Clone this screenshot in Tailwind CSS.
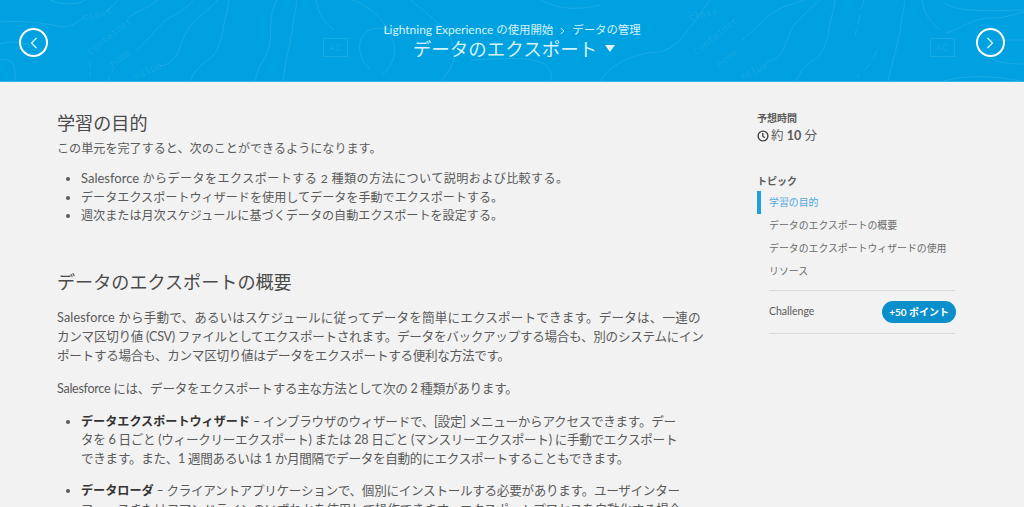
<!DOCTYPE html>
<html lang="ja">
<head>
    <meta charset="UTF-8">
    <title>データのエクスポート</title>
    <script src="https://cdn.jsdelivr.net/npm/@tailwindcss/browser@4"></script>
</head>
<body class="h-[507px] overflow-hidden bg-[#f2f2f2] font-['Lato','Noto_Sans_CJK_JP',sans-serif] text-[#5a5a5a]">

    <!-- Header band -->
    <header class="relative h-[82px] overflow-hidden bg-[#00a1e0] border-b border-[#2fb2e6] flex items-center justify-between px-[19px]">
        <svg class="absolute inset-0" width="1024" height="82" fill="none" stroke="#ffffff" stroke-opacity="0.1" stroke-width="1">
            <path d="M50 0c10 5 30 5 35 0M0 22c25-2 50 2 62 5 10 0 20-8 22-9M118 0c-5 8-10 8-12 12M158 0c-10 8-20 10-30 18M0 44c10-4 35-2 42 10M0 60c15-2 15 5 15 22M137 50c15-14 22-26 32-32 8-4 18-10 24-18M160 66c18-2 20-22 26-34 8-12 24-24 32-32M190 82c5-15 15-20 22-25 12-14 10-30 14-42 2-5 2-10 3-15M255 82c4-20 10-22 14-34 4-15-2-30 8-48M283 82c2-20 7-38 9-50 1-10 4-22 5-32M316 0c2 15 10 24 18 30"/>
            <path d="M90 62v20M108 82c2-8 4-10 6-14" stroke-dasharray="6 4"/>
            <path d="M352 0c30 10 60 50 30 75M390 30c-30-10-40 20-20 40M410 0c40 30 60 50 30 82M470 60c30 0 90-10 80 22M540 0c20 10 40 10 60 5M600 82c10-20 40-30 60-30 20-5 30-25 50-52" />
            <path d="M742 40c18-15 25-25 36-30 8-5 14-5 26-10M766 62c18-2 20-22 26-34 8-12 24-24 32-32M796 82c5-15 15-20 22-25 12-14 10-30 14-42 2-5 2-10 3-15M888 82c4-20 10-38 12-50 1-10 4-22 5-32M922 0c2 15 10 24 18 30M945 33c15-2 25-16 50-15 10 0 20-4 29-6M944 2c8 8 30 10 80 8M1024 40h-30c-5 0-8 5-8 12 0 8 15 12 38 12M940 82c25-8 60-6 84 0"/>
            <path d="M864 0c-4 15-8 30-9 36M877 50c-5 14-12 20-20 27" stroke-dasharray="10 5"/>
            <rect x="323.500" y="38.500" width="24" height="18"/>
            <rect x="930.500" y="38.500" width="24" height="18"/>
            <g fill="#ffffff" fill-opacity="0.1" stroke="none" font-family="Liberation Mono, monospace" font-size="10">
                <text x="83" y="21" transform="rotate(-14 83 21)">class</text>
                <text x="90" y="55" transform="rotate(-38 90 55)">container</text>
                <text x="113" y="68" transform="rotate(-38 113 68)">home</text>
                <text x="135" y="80" transform="rotate(-24 135 80)">value</text>
                <text x="689" y="21" transform="rotate(-14 689 21)">class</text>
                <text x="696" y="55" transform="rotate(-38 696 55)">container</text>
                <text x="719" y="68" transform="rotate(-38 719 68)">home</text>
                <text x="741" y="80" transform="rotate(-24 741 80)">value</text>
                <text x="329" y="51">AC</text>
                <text x="936" y="51">AC</text>
            </g>
        </svg>
        <button class="relative w-[29px] h-[29px] mt-[4px] rounded-full border-2 border-white flex items-center justify-center">
            <svg width="8" height="12" viewBox="0 0 8 12" fill="none" stroke="#e6f6fc" stroke-width="1.200"><path d="M6.500 1 1.500 6l5 5"/></svg>
        </button>
        <div class="relative flex flex-col items-center text-[#d5f1fb] pt-[1px]">
            <div class="text-[11.400px] leading-[16px] flex items-center gap-[7px]">
                <span><span class="text-[12px]">Lightning Experience</span> の使用開始</span>
                <svg width="5" height="8" viewBox="0 0 5 8" fill="none" stroke="#d5f1fb" class="mt-[2px]"><path d="M.8 1l3 3-3 3"/></svg>
                <span>データの管理</span>
            </div>
            <div class="text-[18.500px] leading-[24px] -mt-[1px] pl-[4px] flex items-center gap-[8px]">
                <span>データのエクスポート</span>
                <svg width="10" height="7" viewBox="0 0 10 7" fill="#e6f6fc"><path d="M0 0h10L5 7z"/></svg>
            </div>
        </div>
        <button class="relative w-[29px] h-[29px] mt-[4px] rounded-full border-2 border-white flex items-center justify-center">
            <svg width="8" height="12" viewBox="0 0 8 12" fill="none" stroke="#e6f6fc" stroke-width="1.200"><path d="M1.500 1l5 5-5 5"/></svg>
        </button>
    </header>

    <main class="flex pl-[57px] pt-[28px]">
        <article class="w-[700px] shrink-0 text-[12.600px] tracking-[-0.3px]">
            <h2 class="text-[18.100px] leading-[26px] tracking-normal text-[#4a4a4a]">学習の目的</h2>
            <p class="mt-[3px] text-[12.100px] leading-[19px] tracking-normal">この単元を完了すると、次のことができるようになります。</p>
            <ul class="mt-[11px] list-disc pl-[24px] text-[12.100px] leading-[18.500px] tracking-normal">
                <li class="tracking-[0.4px]"><span class="text-[13px] tracking-normal">Salesforce</span> からデータをエクスポートする 2 種類の方法について説明および比較する。</li>
                <li>データエクスポートウィザードを使用してデータを手動でエクスポートする。</li>
                <li>週次または月次スケジュールに基づくデータの自動エクスポートを設定する。</li>
            </ul>
            <h2 class="mt-[43px] text-[18.100px] leading-[26px] tracking-normal text-[#4a4a4a]">データのエクスポートの概要</h2>
            <p class="mt-[13px] whitespace-nowrap leading-[19px]"><span class="tracking-[0.15px]">Salesforce から手動で、あるいはスケジュールに従ってデータを簡単にエクスポートできます。データは、一連の</span><br>カンマ区切り値 (CSV) ファイルとしてエクスポートされます。データをバックアップする場合も、別のシステムにイン<br>ポートする場合も、カンマ区切り値はデータをエクスポートする便利な方法です。</p>
            <p class="mt-[14px] leading-[19px]">Salesforce には、データをエクスポートする主な方法として次の 2 種類があります。</p>
            <ul class="mt-[15px] list-disc pl-[24px] leading-[18.500px]">
                <li class="whitespace-nowrap"><strong class="text-[12.100px] tracking-normal text-[#333333]">データエクスポートウィザード</strong> – インブラウザのウィザードで、[設定] メニューからアクセスできます。デー<br>タを 6 日ごと (ウィークリーエクスポート) または 28 日ごと (マンスリーエクスポート) に手動でエクスポート<br>できます。また、1 週間あるいは 1 か月間隔でデータを自動的にエクスポートすることもできます。</li>
                <li class="mt-[14px] whitespace-nowrap"><strong class="text-[12.100px] tracking-normal text-[#333333]">データローダ</strong> – クライアントアプリケーションで、個別にインストールする必要があります。ユーザインター<br>フェースまたはコマンドラインのいずれかを使用して操作できます。エクスポートプロセスを自動化する場合</li>
            </ul>
        </article>

        <aside class="w-[198px] text-[#5a5a5a]">
            <p class="text-[10px] leading-[14px] font-bold mt-[1px]">予想時間</p>
            <p class="mt-[2px] flex items-center gap-[2px] text-[12.500px] leading-[18px]">
                <svg width="12" height="12" viewBox="0 0 12 12" fill="none" stroke="#444444" stroke-width="1.400"><circle cx="6" cy="6" r="4.900"/><path d="M5.800 3v3.200l2 1.500"/></svg>
                <span>約 <b>10</b> 分</span>
            </p>
            <p class="mt-[29px] text-[10px] leading-[14px] font-bold">トピック</p>
            <ul class="mt-[3px] text-[9.900px]">
                <li class="h-[23px] border-l-[4px] border-[#1ba1dc] pl-[8px] leading-[23px] text-[#4fa8dc]">学習の目的</li>
                <li class="h-[23px] pl-[12px] leading-[23px] text-[#6b6b6b]">データのエクスポートの概要</li>
                <li class="h-[23px] pl-[12px] leading-[23px] text-[#6b6b6b] whitespace-nowrap">データのエクスポートウィザードの使用</li>
                <li class="h-[23px] pl-[12px] leading-[23px] text-[#6b6b6b]">リソース</li>
            </ul>
            <div class="ml-[12px] mt-[7px] flex h-[44px] items-center justify-between border-y border-[#d8d8d8] text-[10.500px]">
                <span>Challenge</span>
                <span class="-mr-px rounded-full bg-[#0a8fcb] px-[7px] h-[22px] text-[10px] leading-[22px] font-bold text-white">+50 ポイント</span>
            </div>
        </aside>
    </main>
</body>
</html>
